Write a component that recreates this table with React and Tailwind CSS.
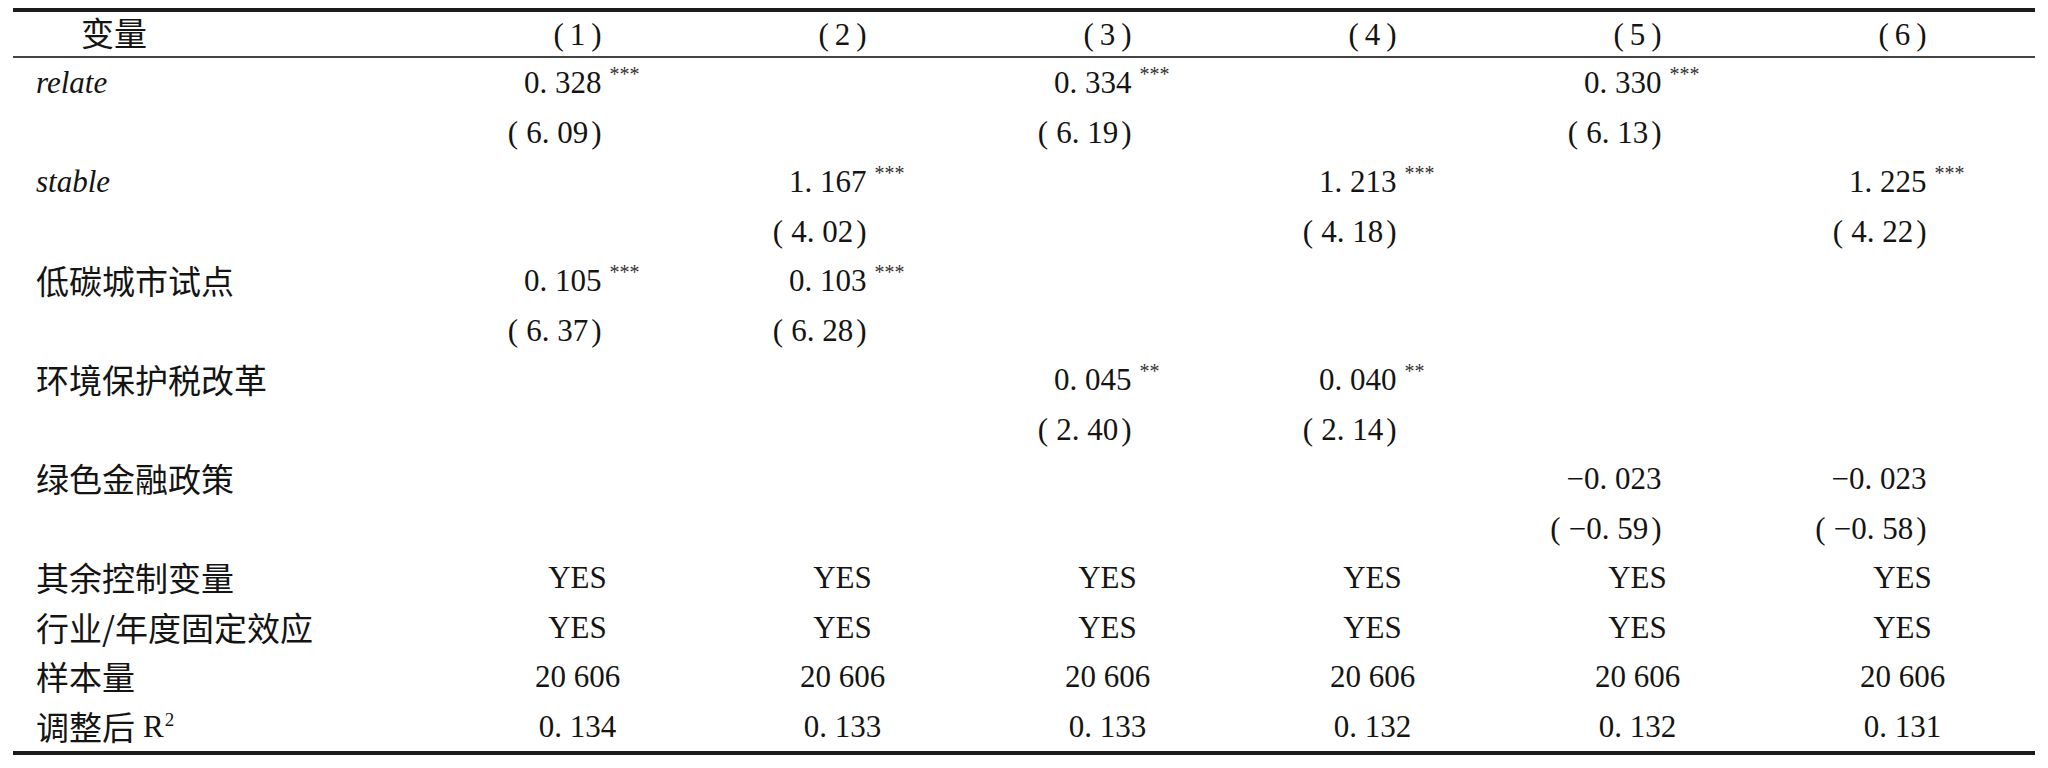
const latin = "font-['Liberation_Serif','Noto_Sans_CJK_SC',serif]";
const cjk = "font-['Noto_Sans_CJK_SC',sans-serif]";

const rows = [
  { label: <i className="text-[31px]">relate</i>, vals: [["0. 328", "***"], null, ["0. 334", "***"], null, ["0. 330", "***"], null] },
  { t: ["6. 09", null, "6. 19", null, "6. 13", null] },
  { label: <i className="text-[31px]">stable</i>, vals: [null, ["1. 167", "***"], null, ["1. 213", "***"], null, ["1. 225", "***"]] },
  { t: [null, "4. 02", null, "4. 18", null, "4. 22"] },
  { label: "低碳城市试点", vals: [["0. 105", "***"], ["0. 103", "***"], null, null, null, null] },
  { t: ["6. 37", "6. 28", null, null, null, null] },
  { label: "环境保护税改革", vals: [null, null, ["0. 045", "**"], ["0. 040", "**"], null, null] },
  { t: [null, null, "2. 40", "2. 14", null, null] },
  { label: "绿色金融政策", vals: [null, null, null, null, ["−0. 023", ""], ["−0. 023", ""]] },
  { t: [null, null, null, null, "−0. 59", "−0. 58"] },
  { label: "其余控制变量", center: ["YES", "YES", "YES", "YES", "YES", "YES"] },
  { label: "行业/年度固定效应", center: ["YES", "YES", "YES", "YES", "YES", "YES"] },
  { label: "样本量", center: ["20 606", "20 606", "20 606", "20 606", "20 606", "20 606"] },
  { label: "r2", center: ["0. 134", "0. 133", "0. 133", "0. 132", "0. 132", "0. 131"] },
];

function Label({ label }) {
  if (!label) return <div />;
  if (label === "r2") {
    return (
      <div className="flex items-center pl-[23px] whitespace-nowrap">
        <span className={`${cjk} text-[33px] leading-none`}>调整后</span>
        <span className="text-[31px] leading-none ml-[8px]">R</span>
        <sup className="text-[19px] leading-none relative top-[-7px] ml-[1px]">2</sup>
      </div>
    );
  }
  if (typeof label === "string") {
    return (
      <div className="flex items-center pl-[23px] whitespace-nowrap">
        <span className={`${cjk} text-[33px] leading-none`}>{label}</span>
      </div>
    );
  }
  return <div className="flex items-center pl-[23px]">{label}</div>;
}

function Coef({ v }) {
  if (!v) return <div />;
  return (
    <div className="flex items-center justify-center">
      <div className="w-[160px] flex justify-end pr-[56px] whitespace-nowrap">
        <span className="relative text-[31px] leading-none">
          {v[0]}
          {v[1] && (
            <span className="absolute left-full top-[-3px] ml-[8px] text-[20px] leading-none text-[#333]">
              {v[1]}
            </span>
          )}
        </span>
      </div>
    </div>
  );
}

function TStat({ v }) {
  if (!v) return <div />;
  return (
    <div className="flex items-center justify-center">
      <div className="w-[160px] flex justify-end pr-[56px] whitespace-nowrap">
        <span className="text-[31px] leading-none">
          (<span className="ml-[8px] mr-[3px]">{v}</span>)
        </span>
      </div>
    </div>
  );
}

export default function App() {
  return (
    <div className={`w-[2048px] h-[768px] bg-white text-[#141414] ${latin}`}>
      <div className="pt-[8px] pl-[13px]">
        <div className="w-[2022px] border-t-[4px] border-b-[4px] border-[#1c1c1c]">
          <div className="grid grid-cols-[432px_repeat(6,265px)] h-[46px] items-center border-b-[2px] border-[#444]">
            <div className="pl-[68px]">
              <span className={`${cjk} text-[33px] leading-none`}>变量</span>
            </div>
            {[1, 2, 3, 4, 5, 6].map((n) => (
              <div key={n} className="flex justify-center text-[31px] leading-none">
                (<span className="mx-[6px]">{n}</span>)
              </div>
            ))}
          </div>
          {rows.map((r, i) => (
            <div key={i} className="grid grid-cols-[432px_repeat(6,265px)] h-[49.5px] items-center">
              <Label label={r.label} />
              {r.vals && r.vals.map((v, j) => <Coef key={j} v={v} />)}
              {r.t && r.t.map((v, j) => <TStat key={j} v={v} />)}
              {r.center &&
                r.center.map((v, j) => (
                  <div key={j} className="flex justify-center text-[31px] leading-none whitespace-nowrap">
                    {v}
                  </div>
                ))}
            </div>
          ))}
        </div>
      </div>
    </div>
  );
}
